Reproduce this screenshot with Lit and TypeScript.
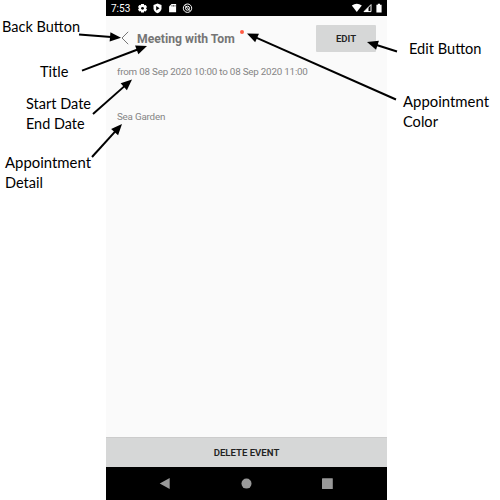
import { LitElement, html, svg, css } from "lit";
import { customElement } from "lit/decorators.js";

type Label = { x: number; y: number; w: number; text: string };
type Arrow = [number, number, number, number];

const LABELS: Label[] = [
  { x: 2, y: 31.5, w: 78, text: "Back Button" },
  { x: 40, y: 77, w: 28.5, text: "Title" },
  { x: 26, y: 109, w: 65, text: "Start Date" },
  { x: 26, y: 129, w: 58.5, text: "End Date" },
  { x: 5, y: 168, w: 86, text: "Appointment" },
  { x: 5, y: 188, w: 38, text: "Detail" },
  { x: 409, y: 54, w: 72.5, text: "Edit Button" },
  { x: 403, y: 107, w: 86, text: "Appointment" },
  { x: 403, y: 127, w: 35, text: "Color" },
];

const ARROWS: Arrow[] = [
  [79, 34.4, 121, 37.8],
  [82, 70.6, 147, 46],
  [93, 114, 132, 79.5],
  [92, 157, 122, 124],
  [397, 51.5, 367, 42],
  [396, 99.5, 247, 33.5],
];

@customElement("event-screen")
export class EventScreen extends LitElement {
  static styles = css`
    :host {
      display: flex;
      flex-direction: column;
      width: 281px;
      height: 500px;
      background: #fafafa;
      font-family: Roboto, sans-serif;
      color: #757575;
    }
    .status {
      display: flex;
      justify-content: space-between;
      height: 16px;
      background: #000;
      color: #fff;
      font-size: 10px;
      line-height: 17px;
    }
    .status-left {
      display: flex;
      padding-left: 5px;
    }
    .time {
      width: 25px;
    }
    .status svg {
      display: block;
    }
    .header {
      display: flex;
      height: 44px;
      padding: 0 11px 0 14px;
    }
    .back {
      width: 10px;
      height: 16px;
      margin-top: 14px;
    }
    .title {
      width: 98px;
      margin: 15px 0 0 7px;
      font-size: 12.2px;
      font-weight: 700;
      line-height: 16px;
      white-space: nowrap;
    }
    .dot {
      width: 4px;
      height: 4px;
      margin: 14px 0 0 4.5px;
      border-radius: 50%;
      background: #ff5a43;
    }
    .edit {
      display: flex;
      align-items: center;
      justify-content: center;
      width: 60px;
      height: 27px;
      margin: 9px 0 0 auto;
      border-radius: 1px;
      background: #d6d7d7;
      color: #222;
      font-size: 9.6px;
      font-weight: 600;
      line-height: 12px;
    }
    .body {
      display: flex;
      flex: 1;
      flex-direction: column;
      gap: 32px;
      padding: 5px 11px 0;
      color: #858585;
      font-size: 9.8px;
      letter-spacing: -0.2px;
      line-height: 13px;
      white-space: nowrap;
    }
    .delete {
      display: flex;
      align-items: center;
      justify-content: center;
      box-sizing: border-box;
      height: 30px;
      border-top: 1px solid #ccc;
      background: #d6d7d7;
      color: #222;
      font-size: 9.6px;
      font-weight: 600;
    }
    .nav {
      height: 33px;
      background: #000;
    }
    .nav svg {
      display: block;
    }
  `;

  render() {
    return html`
      <div class="status">
        <div class="status-left">
          <span class="time">7:53</span>
          <svg width="60" height="16" viewBox="136 0 60 16">
            <g fill="#fff">
              <path d="M141.1 4h2.8l.4 1.3 1.4-.3 1.3 2-1 1.2 1 1.2-1.3 2-1.4-.3-.4 1.3h-2.8l-.4-1.3-1.4.3-1.3-2 1-1.2-1-1.2 1.3-2 1.4.3z" />
              <path d="M157.5 3.5l4 1.6v3.2c0 2.3-1.7 4.2-4 5-2.3-.8-4-2.7-4-5V5.1z" />
              <path d="M171.5 4h4.6v8.2h-7V6.4z" />
            </g>
            <circle cx="142.5" cy="8.3" r="1.4" fill="#000" />
            <path d="M156.2 6l3.4 2.2-3.4 2.2z" fill="#000" />
            <path d="M172 5v1.6M173.5 5v1.6M175 5v1.6" stroke="#000" stroke-width=".6" />
            <g fill="none" stroke="#fff">
              <circle cx="187.5" cy="8.2" r="4.2" stroke-width="1" />
              <circle cx="187.5" cy="8.2" r="2" stroke-width="1" />
              <path d="M184.7 5.3l5.8 5.8" stroke-width="1" />
            </g>
          </svg>
        </div>
        <svg width="40" height="16" viewBox="347 0 40 16">
          <path d="M351.8 5.4q5-3.3 10 0L356.8 12z" fill="#fff" />
          <path d="M371 4.6v7h-7z" fill="none" stroke="#fff" stroke-width="1" />
          <path d="M368.5 7v5h-4.7z" fill="#fff" />
          <path d="M376.4 4.8h1.4V3.8h2.2v1h1.6v7.8h-5.2z" fill="#fff" />
        </svg>
      </div>
      <div class="header">
        <svg class="back" viewBox="0 0 10 16">
          <path d="M8.2 1.8L2 8l6.2 6.2" fill="none" stroke="#666" stroke-width=".9" />
        </svg>
        <div class="title">Meeting with Tom</div>
        <div class="dot"></div>
        <div class="edit">EDIT</div>
      </div>
      <div class="body">
        <div>from 08 Sep 2020 10:00 to 08 Sep 2020 11:00</div>
        <div>Sea Garden</div>
      </div>
      <div class="delete">DELETE EVENT</div>
      <div class="nav">
        <svg width="281" height="33" viewBox="106 467 281 33" fill="#999">
          <path d="M159.7 483.5l10-5.6v11.2z" />
          <circle cx="246.5" cy="483.6" r="5" />
          <rect x="322" y="478.3" width="10.8" height="10.8" rx=".5" />
        </svg>
      </div>
    `;
  }
}

@customElement("app-root")
export class AppRoot extends LitElement {
  static styles = css`
    :host {
      display: flex;
      position: relative;
      width: 500px;
      height: 500px;
      overflow: hidden;
      background: #fff;
    }
    event-screen {
      margin-left: 106px;
    }
    .notes {
      position: absolute;
      inset: 0;
      width: 500px;
      height: 500px;
      font-family: Lato, sans-serif;
      font-size: 14.6px;
    }
  `;

  private arrow([x1, y1, x2, y2]: Arrow) {
    const len = Math.hypot(x2 - x1, y2 - y1);
    const ux = (x2 - x1) / len;
    const uy = (y2 - y1) / len;
    const bx = x2 - ux * 11;
    const by = y2 - uy * 11;
    return svg`
      <line x1=${x1} y1=${y1} x2=${bx + ux} y2=${by + uy} stroke="#000" stroke-width="2" />
      <polygon points="${x2},${y2} ${bx - uy * 4.7},${by + ux * 4.7} ${bx + uy * 4.7},${by - ux * 4.7}" />`;
  }

  render() {
    return html`
      <event-screen></event-screen>
      <svg class="notes" viewBox="0 0 500 500">
        ${ARROWS.map((a) => this.arrow(a))}
        ${LABELS.map(
          (l) => svg`<text x=${l.x} y=${l.y} textLength=${l.w} lengthAdjust="spacingAndGlyphs">${l.text}</text>`
        )}
      </svg>
    `;
  }
}
